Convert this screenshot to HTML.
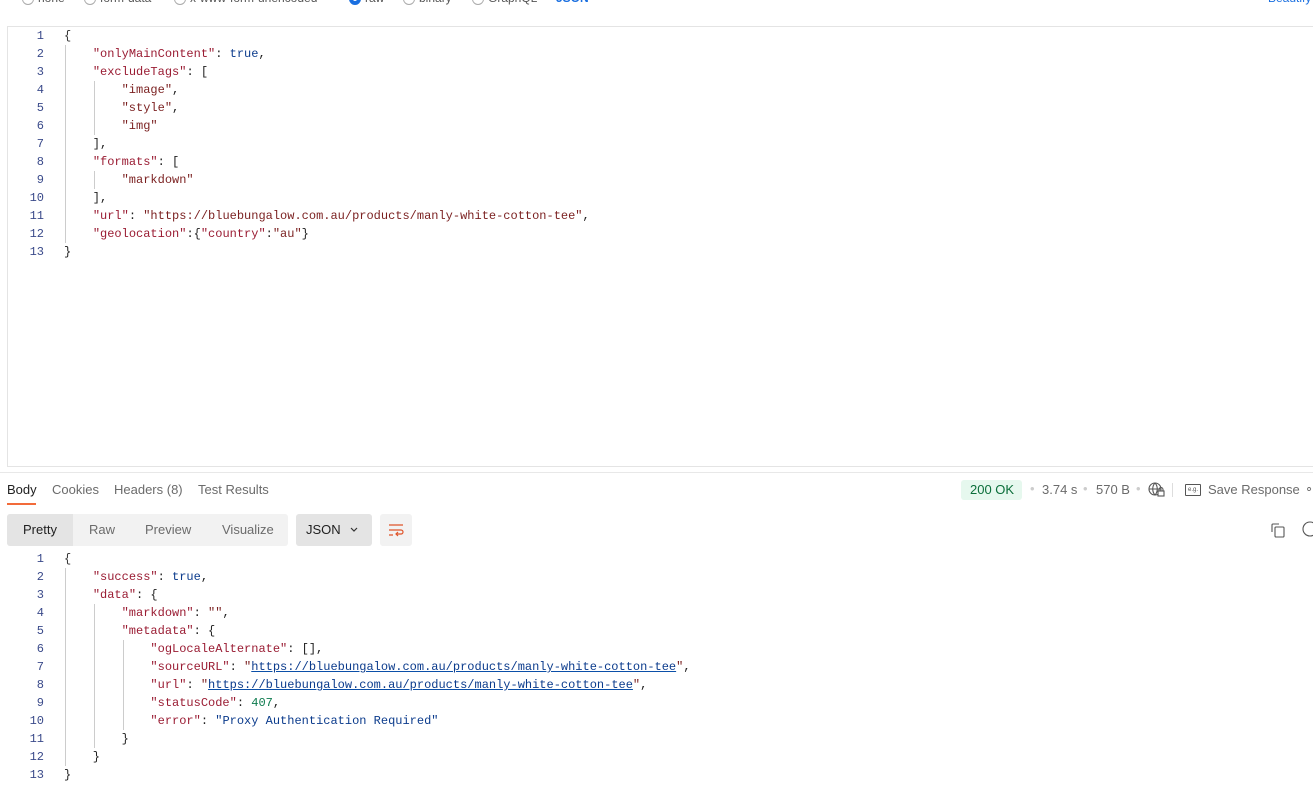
<!DOCTYPE html>
<html><head><meta charset="utf-8"><style>
*{margin:0;padding:0;box-sizing:border-box}
body{width:1313px;height:789px;overflow:hidden;background:#fff;font-family:"Liberation Sans",sans-serif;position:relative;color:#212121}
.a{position:absolute;white-space:pre}
.top{top:-9px;font-size:12px;color:#555}
.rad{position:absolute;top:-7px;width:12px;height:12px;border:1px solid #aaa;border-radius:50%}
.code{font-family:"Liberation Mono",monospace;font-size:12px;line-height:18px}
.ln{position:absolute;width:30px;text-align:right;color:#3a4a8a;font-family:"Liberation Mono",monospace;font-size:12px}
.k{color:#9a1c33}.s{color:#7a1f1f}.b{color:#0b3b8c}.n{color:#0c7a4d}.p{color:#333}
.u{color:#0b3b8c;text-decoration:underline;text-decoration-color:#0b4fa8}
.g{position:absolute;width:1px;background:#ccc}
</style></head><body>
<div class="rad" style="left:22px"></div><div class="a top" style="left:38px">none</div>
<div class="rad" style="left:84px"></div><div class="a top" style="left:100px">form-data</div>
<div class="rad" style="left:174px"></div><div class="a top" style="left:190px">x-www-form-urlencoded</div>
<div class="rad" style="left:349px;border:4px solid #1a6fe0"></div><div class="a top" style="left:365px">raw</div>
<div class="rad" style="left:403px"></div><div class="a top" style="left:419px">binary</div>
<div class="rad" style="left:472px"></div><div class="a top" style="left:488px">GraphQL</div>
<div class="a top" style="left:556px;color:#1a6fe0;font-weight:bold">JSON</div>
<div class="a top" style="left:1268px;color:#1a6fe0">Beautify</div>

<div style="position:absolute;left:7px;top:26px;width:1320px;height:441px;border:1px solid #e4e4e4;border-right:none"></div>

<div class="ln" style="left:14px;top:27px;line-height:18px">1<br>2<br>3<br>4<br>5<br>6<br>7<br>8<br>9<br>10<br>11<br>12<br>13</div>
<div class="g" style="left:65px;top:45px;height:198px"></div>
<div class="g" style="left:94px;top:81px;height:54px"></div>
<div class="g" style="left:94px;top:171px;height:18px"></div>
<div class="a code" style="left:64px;top:27px"><span class="p">{</span>
    <span class="k">"onlyMainContent"</span>: <span class="b">true</span>,
    <span class="k">"excludeTags"</span>: [
        <span class="s">"image"</span>,
        <span class="s">"style"</span>,
        <span class="s">"img"</span>
    ],
    <span class="k">"formats"</span>: [
        <span class="s">"markdown"</span>
    ],
    <span class="k">"url"</span>: <span class="s">"https://bluebungalow.com.au/products/manly-white-cotton-tee"</span>,
    <span class="k">"geolocation"</span>:{<span class="k">"country"</span>:<span class="s">"au"</span>}
}</div>

<div style="position:absolute;left:0;top:472px;width:1313px;height:1px;background:#e8e8e8"></div>

<div class="a" style="left:7px;top:482px;font-size:13px;color:#212121">Body</div>
<div style="position:absolute;left:7px;top:503px;width:29px;height:2px;background:#f26b3a"></div>
<div class="a" style="left:52px;top:482px;font-size:13px;color:#6b6b6b">Cookies</div>
<div class="a" style="left:114px;top:482px;font-size:13px;color:#6b6b6b">Headers (8)</div>
<div class="a" style="left:198px;top:482px;font-size:13px;color:#6b6b6b">Test Results</div>

<div style="position:absolute;left:961px;top:480px;width:61px;height:20px;background:#e6f8ee;border-radius:3px"></div>
<div class="a" style="left:970px;top:482px;font-size:13px;color:#0b6e3a">200 OK</div>
<div class="a" style="left:1030px;top:481px;font-size:13px;color:#ccc">•</div>
<div class="a" style="left:1042px;top:482px;font-size:13px;color:#6b6b6b">3.74 s</div>
<div class="a" style="left:1083px;top:481px;font-size:13px;color:#ccc">•</div>
<div class="a" style="left:1096px;top:482px;font-size:13px;color:#6b6b6b">570 B</div>
<div class="a" style="left:1136px;top:481px;font-size:13px;color:#ccc">•</div>
<svg style="position:absolute;left:1148px;top:482px" width="18" height="16" viewBox="0 0 18 16" fill="none" stroke="#555" stroke-width="1.1"><circle cx="7" cy="7" r="6"/><path d="M1 7h12M7 1c-3 3-3 9 0 12M7 1c3 3 3 9 0 12"/><rect x="10" y="9" width="6" height="5" fill="#fff"/><path d="M11 9V7.5a2 2 0 014 0V9"/></svg>
<div style="position:absolute;left:1172px;top:483px;width:1px;height:14px;background:#ddd"></div>
<div style="position:absolute;left:1185px;top:484px;width:16px;height:12px;border:1px solid #555;border-radius:1px;font-size:6px;line-height:10px;text-align:center;color:#555">e.g.</div>
<div class="a" style="left:1208px;top:482px;font-size:13px;color:#6b6b6b">Save Response</div>
<div class="a" style="left:1305px;top:481px;font-size:13px;color:#6b6b6b">∘∘</div>

<div style="position:absolute;left:7px;top:514px;width:281px;height:32px;background:#f2f2f2;border-radius:3px"></div>
<div style="position:absolute;left:7px;top:514px;width:66px;height:32px;background:#e4e4e4;border-radius:3px 0 0 3px"></div>
<div class="a" style="left:23px;top:522px;font-size:13px;color:#212121">Pretty</div>
<div class="a" style="left:89px;top:522px;font-size:13px;color:#6b6b6b">Raw</div>
<div class="a" style="left:145px;top:522px;font-size:13px;color:#6b6b6b">Preview</div>
<div class="a" style="left:222px;top:522px;font-size:13px;color:#6b6b6b">Visualize</div>
<div style="position:absolute;left:296px;top:514px;width:76px;height:32px;background:#e4e4e4;border-radius:3px"></div>
<div class="a" style="left:306px;top:522px;font-size:13px;color:#212121">JSON</div>
<svg style="position:absolute;left:349px;top:526px" width="10" height="8" viewBox="0 0 10 8" fill="none" stroke="#333" stroke-width="1.2"><path d="M2 2l3 3 3-3"/></svg>
<div style="position:absolute;left:380px;top:514px;width:32px;height:32px;background:#f2f2f2;border-radius:3px"></div>
<svg style="position:absolute;left:388px;top:522px" width="16" height="16" viewBox="0 0 16 16" fill="none" stroke="#e0542a" stroke-width="1.2"><path d="M1 3h14M1 8h12a2 2 0 010 4H8M10 10l-2 2 2 2M1 13h4"/></svg>
<svg style="position:absolute;left:1270px;top:522px" width="16" height="16" viewBox="0 0 16 16" fill="none" stroke="#555" stroke-width="1.1"><path d="M2 10V3a1 1 0 011-1h6"/><rect x="5" y="5" width="9" height="10" rx="1"/></svg>
<svg style="position:absolute;left:1300px;top:521px" width="13" height="16" viewBox="0 0 13 16" fill="none" stroke="#555" stroke-width="1.1"><circle cx="10" cy="8" r="7"/></svg>

<div class="ln" style="left:14px;top:550px;line-height:18px">1<br>2<br>3<br>4<br>5<br>6<br>7<br>8<br>9<br>10<br>11<br>12<br>13</div>
<div class="g" style="left:65px;top:568px;height:198px"></div>
<div class="g" style="left:94px;top:604px;height:144px"></div>
<div class="g" style="left:123px;top:640px;height:90px"></div>
<div class="a code" style="left:64px;top:550px"><span class="p">{</span>
    <span class="k">"success"</span>: <span class="b">true</span>,
    <span class="k">"data"</span>: {
        <span class="k">"markdown"</span>: <span class="s">""</span>,
        <span class="k">"metadata"</span>: {
            <span class="k">"ogLocaleAlternate"</span>: [],
            <span class="k">"sourceURL"</span>: <span class="s">"</span><span class="u">https://bluebungalow.com.au/products/manly-white-cotton-tee</span><span class="s">"</span>,
            <span class="k">"url"</span>: <span class="s">"</span><span class="u">https://bluebungalow.com.au/products/manly-white-cotton-tee</span><span class="s">"</span>,
            <span class="k">"statusCode"</span>: <span class="n">407</span>,
            <span class="k">"error"</span>: <span class="b">"Proxy Authentication Required"</span>
        }
    }
}</div>
</body></html>
